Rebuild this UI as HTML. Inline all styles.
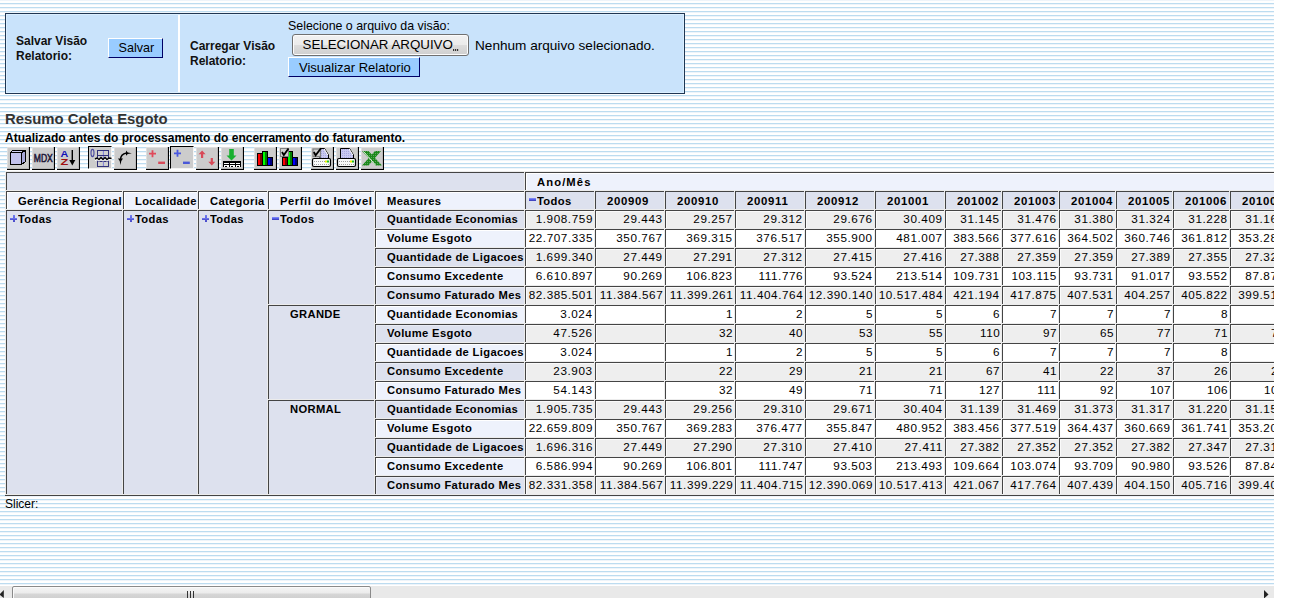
<!DOCTYPE html>
<html><head><meta charset="utf-8">
<style>
html,body{margin:0;padding:0;}
body{width:1302px;height:598px;overflow:hidden;background:#fff;position:relative;font-family:"Liberation Sans",sans-serif;}
#vp{position:absolute;left:0;top:0;width:1274px;height:586px;overflow:hidden;
 background-image:linear-gradient(to bottom,#eef4fa 0,#eef4fa 1px,#fff 1px,#fff 3px,#bcdcf0 3px,#bcdcf0 4px);
 background-size:100% 4px;}
.abs{position:absolute;white-space:nowrap;}
#box{position:absolute;left:5px;top:13px;width:680px;height:81px;box-sizing:border-box;border:1px solid #1f3652;background:#c9e3fb;box-shadow:inset 1px 1px 0 #dbefff,inset -1px -1px 0 #dbefff;}
#div{position:absolute;left:178px;top:15px;width:2px;height:77px;background:#fff;}
.lbl{position:absolute;font:bold 12px/15px "Liberation Sans",sans-serif;color:#111;white-space:nowrap;}
.bbtn{position:absolute;box-sizing:border-box;background:#99ccff;border-top:1px solid #fff;border-left:1px solid #fff;border-bottom:1px solid #000066;border-right:1px solid #000066;font:13px "Liberation Sans",sans-serif;color:#000;}
.fbtn{position:absolute;box-sizing:border-box;border:1px solid #707070;border-radius:3px;background:linear-gradient(to bottom,#f2f2f2 0,#ebebeb 50%,#dddddd 50%,#cfcfcf 100%);box-shadow:inset 0 0 0 1px #fcfcfc;font:13px "Liberation Sans",sans-serif;color:#000;}
.t{position:absolute;white-space:nowrap;}
.tb{position:absolute;top:147px;width:23px;height:23px;box-sizing:border-box;background:#cccccc;border-right:1px solid #000;border-bottom:1px solid #000;box-shadow:inset -1px -1px 0 #b8b8b8,inset 1px 1px 0 #dedede;}
.tb.p{top:146px;width:24px;border:none;border-top:1px solid #000;border-left:1px solid #000;border-right:1px solid #f4f4f4;border-bottom:1px solid #f4f4f4;box-shadow:none;background:#cccccc;}
.tb svg{position:absolute;left:0;top:0;}
/* table */
.c{position:absolute;box-sizing:border-box;border-top:1px solid #444;border-left:1px solid #444;white-space:nowrap;overflow:hidden;font:10px "Liberation Sans",sans-serif;color:#000;}
.hh{background:#dde1ee;}
.ch{background:#eef2fc;box-shadow:inset 1px 1px 0 #fff;}
.rl{background:#dde1ee;box-shadow:inset 1px 1px 0 #e9ecf5;}
.rd{background:#eef2fc;box-shadow:inset 1px 1px 0 #fff;}
.dg{background:#eeeeee;box-shadow:inset 1px 1px 0 #fafafa;}
.dw{background:#ffffff;}
.b{font-weight:bold;}
.tx{position:absolute;top:1px;line-height:16px;letter-spacing:0.3px;transform:scaleX(1.12);transform-origin:0 0;}
.tn{position:absolute;right:1px;top:1px;line-height:16px;letter-spacing:0.5px;transform:scaleX(1.17);transform-origin:100% 0;}
.td{letter-spacing:0.6px;transform:scaleX(1.14);}
.mi{position:absolute;top:6px;width:7px;height:3px;background:linear-gradient(#8a94fa,#5560e8 50%,#3838b0);}
.pi{position:absolute;top:4px;width:7px;height:7px;background:linear-gradient(#7480f4,#4848c8) 0 3px/7px 2px no-repeat,linear-gradient(#7480f4,#4848c8) 3px 0/2px 7px no-repeat;}
.hdr .tx{top:2px;}
#hs{position:absolute;left:0;top:586px;width:1274px;height:12px;background:#e9e9e9;}
</style></head><body>
<div id="vp">
<div id="box"></div>
<div id="div"></div>
<div class="lbl" style="left:16px;top:34px;">Salvar Visão<br>Relatorio:</div>
<div class="bbtn" style="left:108px;top:38px;width:55px;height:20px;"><span class="t" style="left:9.5px;top:2px;font-size:12.6px;">Salvar</span></div>
<div class="lbl" style="left:190px;top:39px;">Carregar Visão<br>Relatorio:</div>
<div class="t" style="left:288px;top:19px;font:12.4px 'Liberation Sans',sans-serif;color:#000;">Selecione o arquivo da visão:</div>
<div class="fbtn" style="left:292px;top:34px;width:177px;height:22px;"><span class="t" style="left:9.5px;top:2px;font-size:13.33px;">SELECIONAR ARQUIVO</span><span class="t" style="left:160px;top:14px;width:6px;height:2px;background:repeating-linear-gradient(to right,#333 0,#333 1px,rgba(0,0,0,0.15) 1px,rgba(0,0,0,0.15) 2px);"></span></div>
<div class="t" style="left:475px;top:38px;font:13.6px 'Liberation Sans',sans-serif;color:#000;">Nenhum arquivo selecionado.</div>
<div class="bbtn" style="left:288px;top:57px;width:132px;height:20px;"><span class="t" style="left:10px;top:2px;">Visualizar Relatorio</span></div>
<div class="t" style="left:5px;top:111px;font:bold 14.85px 'Liberation Sans',sans-serif;color:#333;">Resumo Coleta Esgoto</div>
<div class="t" style="left:5px;top:131px;font:bold 12px 'Liberation Sans',sans-serif;color:#000;">Atualizado antes do processamento do encerramento do faturamento.</div>
<div class="t" style="left:5px;top:497px;font:12px 'Liberation Sans',sans-serif;color:#000;">Slicer:</div>
<div class="tb" style="left:7px;"><svg width="23" height="23" viewBox="0 0 23 23" shape-rendering="crispEdges">
<path d="M14.5 5.5 L18.5 3.5 L18.5 14.5 L14.5 17.5 Z" fill="#a6a6d8" stroke="#000"/>
<path d="M3.5 5.5 L5.5 3.5 L18.5 3.5 L14.5 5.5 Z" fill="#d0d0f4" stroke="#000"/>
<rect x="3.5" y="5.5" width="11" height="12" fill="#c2c2ec" stroke="#000"/></svg></div>
<div class="tb" style="left:32px;"><svg width="23" height="23" viewBox="0 0 23 23">
<text x="1.8" y="15" font-family="Liberation Sans" font-size="11" fill="#1e1838" stroke="#1e1838" stroke-width="0.55" textLength="19" lengthAdjust="spacingAndGlyphs">MDX</text></svg></div>
<div class="tb" style="left:57px;"><svg width="23" height="23" viewBox="0 0 23 23">
<text x="3.4" y="10" font-family="Liberation Sans" font-size="9.5" font-weight="bold" fill="#1010b8" textLength="7.8" lengthAdjust="spacingAndGlyphs">A</text>
<text x="3.4" y="18.2" font-family="Liberation Sans" font-size="9.5" font-weight="bold" fill="#a01010" textLength="7.8" lengthAdjust="spacingAndGlyphs">Z</text>
<rect x="14.6" y="3" width="1.4" height="12" fill="#000"/><path d="M12.3 13 L18.3 13 L15.3 18.5 Z" fill="#000"/></svg></div>
<div class="tb p" style="left:88px;"><svg width="23" height="23" viewBox="0 0 23 23">
<ellipse cx="3.5" cy="6" rx="1.5" ry="3.6" fill="none" stroke="#4848a0" stroke-width="1.1"/>
<rect x="8.5" y="3.5" width="11" height="16" fill="#d0d0d0" stroke="#30307a"/>
<line x1="14.4" y1="4" x2="14.4" y2="19" stroke="#8080d8"/>
<line x1="9" y1="8.5" x2="19" y2="8.5" stroke="#30307a"/><line x1="9" y1="14.5" x2="19" y2="14.5" stroke="#30307a"/>
<path d="M6 12 L8 11 L10 12.5 L12 10.5 L14 12.5 L16 10.5 L18 12.5 L20 11 L22.5 11.5" fill="none" stroke="#fff" stroke-width="1.5" transform="translate(0,1.3)"/>
<path d="M6 12 L8 11 L10 12.5 L12 10.5 L14 12.5 L16 10.5 L18 12.5 L20 11 L22.5 11.5" fill="none" stroke="#000" stroke-width="1.4"/></svg></div>
<div class="tb" style="left:114px;"><svg width="23" height="23" viewBox="0 0 23 23">
<path d="M6.5 13 Q6.5 7 12.5 6" fill="none" stroke="#000" stroke-width="1.5"/>
<path d="M4 11.5 L9 11.5 L7.3 14 L6.5 18 L5.7 14 Z" fill="#000"/>
<path d="M12 3.6 L13.8 5.5 L17.8 6.2 L13.8 7 L12 8.8 Z" fill="#000"/></svg></div>
<div class="tb" style="left:146px;"><svg width="23" height="23" viewBox="0 0 23 23">
<path d="M3 5.8 H10 V7.6 H3 Z M5.6 3.2 H7.4 V10.2 H5.6 Z" fill="#e04a5a"/>
<rect x="12.2" y="14.6" width="6.8" height="2.4" fill="#d84a58"/></svg></div>
<div class="tb p" style="left:170px;"><svg width="23" height="23" viewBox="0 0 23 23">
<path d="M3 5.4 H10 V7.2 H3 Z M5.6 2.8 H7.4 V9.8 H5.6 Z" fill="#4a58e0"/>
<rect x="12" y="14.6" width="6.8" height="2.4" fill="#4a58d8"/></svg></div>
<div class="tb" style="left:196px;"><svg width="23" height="23" viewBox="0 0 23 23">
<path d="M6.1 3.5 L9.6 7.2 L7.2 7.2 L7.2 11 L5 11 L5 7.2 L2.6 7.2 Z" fill="#d84a58"/>
<path d="M15.8 18.5 L19.3 14.8 L16.9 14.8 L16.9 11 L14.7 11 L14.7 14.8 L12.3 14.8 Z" fill="#d84a58"/></svg></div>
<div class="tb" style="left:221px;"><svg width="23" height="23" viewBox="0 0 23 23">
<path d="M8.2 2 H12.8 V8.5 H15.5 L10.5 13.5 L5.5 8.5 H8.2 Z" fill="#18b030"/>
<g shape-rendering="crispEdges"><rect x="2" y="14" width="18" height="6" fill="#fff"/><rect x="2" y="14" width="18" height="1.5" fill="#000"/><rect x="2" y="17" width="18" height="1" fill="#000"/>
<rect x="2" y="14" width="1" height="6" fill="#000"/><rect x="8" y="14" width="1" height="6" fill="#000"/><rect x="14" y="14" width="1" height="6" fill="#000"/><rect x="19" y="14" width="1" height="6" fill="#000"/>
<rect x="4" y="19" width="2" height="1" fill="#000"/><rect x="10" y="19" width="2" height="1" fill="#000"/><rect x="16" y="19" width="2" height="1" fill="#000"/></g></svg></div>
<div class="tb" style="left:254px;"><svg width="23" height="23" viewBox="0 0 23 23" shape-rendering="crispEdges">
<rect x="3" y="6" width="6" height="13" fill="#000"/><rect x="4" y="7" width="2" height="11" fill="#ff0000"/><rect x="6" y="7" width="2" height="11" fill="#800000"/>
<rect x="8" y="4" width="6" height="15" fill="#000"/><rect x="9" y="5" width="2" height="13" fill="#00ff00"/><rect x="11" y="5" width="2" height="13" fill="#008000"/>
<rect x="13" y="10" width="6" height="9" fill="#000"/><rect x="14" y="11" width="2" height="7" fill="#0000ff"/><rect x="16" y="11" width="2" height="7" fill="#000080"/></svg></div>
<div class="tb" style="left:279px;"><svg width="23" height="23" viewBox="0 0 23 23" shape-rendering="crispEdges">
<rect x="3" y="10" width="6" height="9" fill="#000"/><rect x="4" y="11" width="2" height="7" fill="#ff0000"/><rect x="6" y="11" width="2" height="7" fill="#800000"/>
<rect x="8" y="4" width="6" height="15" fill="#000"/><rect x="9" y="5" width="2" height="13" fill="#00ff00"/><rect x="11" y="5" width="2" height="13" fill="#008000"/>
<rect x="13" y="10" width="6" height="9" fill="#000"/><rect x="14" y="11" width="2" height="7" fill="#0000ff"/><rect x="16" y="11" width="2" height="7" fill="#000080"/>
<rect x="1.5" y="1.5" width="8" height="8" fill="#d0d0d0" stroke="#808080"/>
<path d="M3 5 L4.8 8 L9.5 1.5" fill="none" stroke="#000" stroke-width="1.8" shape-rendering="auto"/></svg></div>
<div class="tb" style="left:311px;"><svg width="23" height="23" viewBox="0 0 23 23">
<defs><pattern id="dp" width="2" height="2" patternUnits="userSpaceOnUse"><rect width="2" height="2" fill="#c8c8f0"/><rect width="1" height="1" fill="#a8a8e0"/></pattern>
<pattern id="gp" width="2" height="2" patternUnits="userSpaceOnUse"><rect width="2" height="2" fill="#1a8a1a"/><rect width="1" height="1" fill="#60a060"/></pattern></defs>
<path d="M9 1.5 L13.5 1.5 L17.5 8 L17.5 11.5 L9 11.5 Z" fill="url(#dp)" stroke="#000"/>
<path d="M13.2 2 L16.8 8" stroke="#fff" stroke-width="1"/>
<rect x="2" y="2" width="7.5" height="7.5" fill="#d0d0d0" stroke="#808080" stroke-width="1.2"/>
<path d="M2.8 5 L4.6 8.3 L10 1.2" fill="none" stroke="#000" stroke-width="1.8"/>
<rect x="1.5" y="11.5" width="18" height="8" rx="1.5" fill="#fafafa" stroke="#000" stroke-width="1.2"/>
<line x1="3" y1="14.5" x2="14" y2="14.5" stroke="#a0a0a0" stroke-dasharray="1 1"/>
<line x1="3" y1="17.5" x2="18" y2="17.5" stroke="#a0a0a0" stroke-dasharray="1 1"/>
<rect x="14" y="13.5" width="2" height="2" fill="#f0f000"/><rect x="16" y="13.5" width="2" height="2" fill="#20c020"/></svg></div>
<div class="tb" style="left:336px;"><svg width="23" height="23" viewBox="0 0 23 23">
<path d="M4.5 1.5 L13.5 1.5 L17.5 8 L17.5 11.5 L4.5 11.5 Z" fill="url(#dp)" stroke="#000"/>
<path d="M13.2 2 L16.8 8" stroke="#fff"/>
<rect x="1.5" y="11.5" width="18" height="8" rx="1.5" fill="#fafafa" stroke="#000" stroke-width="1.2"/>
<line x1="3" y1="14.5" x2="14" y2="14.5" stroke="#a0a0a0" stroke-dasharray="1 1"/>
<line x1="3" y1="17.5" x2="18" y2="17.5" stroke="#a0a0a0" stroke-dasharray="1 1"/>
<rect x="14" y="13.5" width="2" height="2" fill="#f0f000"/><rect x="16" y="13.5" width="2" height="2" fill="#20c020"/></svg></div>
<div class="tb" style="left:361px;"><svg width="23" height="23" viewBox="0 0 23 23">
<path d="M1 4 L7.5 4 L21 18.5 L14.5 18.5 Z M14 4 L20 4 L7.5 18.5 L1 18.5 Z" fill="url(#gp)"/>
<line x1="2.5" y1="4.5" x2="14.5" y2="18" stroke="#f0fff0" stroke-width="0.9"/></svg></div>
<div style="position:absolute;left:5px;top:171px;width:1290px;height:324px;background:#ececec;"></div>
<div style="position:absolute;left:5px;top:495px;width:1290px;height:1px;background:#444;"></div>
<div class="c hh hdr" style="left:6px;top:172px;width:518px;height:18px;"></div>
<div class="c ch hdr" style="left:525px;top:172px;width:821px;height:18px;"><span class="tx b" style="left:11px;letter-spacing:1.0px">Ano/Mês</span></div>
<div class="c ch hdr" style="left:6px;top:191px;width:116px;height:18px;"><span class="tx b" style="left:11px">Gerência Regional</span></div>
<div class="c ch hdr" style="left:123px;top:191px;width:74px;height:18px;"><span class="tx b" style="left:11px">Localidade</span></div>
<div class="c ch hdr" style="left:198px;top:191px;width:69px;height:18px;"><span class="tx b" style="left:11px">Categoria</span></div>
<div class="c ch hdr" style="left:268px;top:191px;width:106px;height:18px;"><span class="tx b" style="left:11px;letter-spacing:0.5px">Perfil do Imóvel</span></div>
<div class="c ch hdr" style="left:375px;top:191px;width:149px;height:18px;"><span class="tx b" style="left:11px">Measures</span></div>
<div class="c hh hdr" style="left:525px;top:191px;width:69px;height:18px;"><span class="mi" style="left:3px"></span><span class="tx b" style="left:11px">Todos</span></div>
<div class="c hh hdr" style="left:595px;top:191px;width:69px;height:18px;"><span class="tx b td" style="left:11px">200909</span></div>
<div class="c hh hdr" style="left:665px;top:191px;width:69px;height:18px;"><span class="tx b td" style="left:11px">200910</span></div>
<div class="c hh hdr" style="left:735px;top:191px;width:69px;height:18px;"><span class="tx b td" style="left:11px">200911</span></div>
<div class="c hh hdr" style="left:805px;top:191px;width:69px;height:18px;"><span class="tx b td" style="left:11px">200912</span></div>
<div class="c hh hdr" style="left:875px;top:191px;width:69px;height:18px;"><span class="tx b td" style="left:11px">201001</span></div>
<div class="c hh hdr" style="left:945px;top:191px;width:56px;height:18px;"><span class="tx b td" style="left:11px">201002</span></div>
<div class="c hh hdr" style="left:1002px;top:191px;width:56px;height:18px;"><span class="tx b td" style="left:11px">201003</span></div>
<div class="c hh hdr" style="left:1059px;top:191px;width:56px;height:18px;"><span class="tx b td" style="left:11px">201004</span></div>
<div class="c hh hdr" style="left:1116px;top:191px;width:56px;height:18px;"><span class="tx b td" style="left:11px">201005</span></div>
<div class="c hh hdr" style="left:1173px;top:191px;width:56px;height:18px;"><span class="tx b td" style="left:11px">201006</span></div>
<div class="c hh hdr" style="left:1230px;top:191px;width:56px;height:18px;"><span class="tx b td" style="left:11px">201007</span></div>
<div class="c hh" style="left:6px;top:210px;width:116px;height:284px;"><span class="pi" style="left:3px"></span><span class="tx b" style="left:11px">Todas</span></div>
<div class="c hh" style="left:123px;top:210px;width:74px;height:284px;"><span class="pi" style="left:3px"></span><span class="tx b" style="left:11px">Todas</span></div>
<div class="c hh" style="left:198px;top:210px;width:69px;height:284px;"><span class="pi" style="left:3px"></span><span class="tx b" style="left:11px">Todas</span></div>
<div class="c hh" style="left:268px;top:210px;width:106px;height:94px;"><span class="mi" style="left:3px"></span><span class="tx b" style="left:11px">Todos</span></div>
<div class="c hh" style="left:268px;top:305px;width:106px;height:94px;"><span class="tx b" style="left:21px">GRANDE</span></div>
<div class="c hh" style="left:268px;top:400px;width:106px;height:94px;"><span class="tx b" style="left:21px">NORMAL</span></div>
<div class="c rl" style="left:375px;top:210px;width:149px;height:18px;"><span class="tx b" style="left:11px">Quantidade Economias</span></div>
<div class="c dg" style="left:525px;top:210px;width:69px;height:18px;"><span class="tn">1.908.759</span></div>
<div class="c dg" style="left:595px;top:210px;width:69px;height:18px;"><span class="tn">29.443</span></div>
<div class="c dg" style="left:665px;top:210px;width:69px;height:18px;"><span class="tn">29.257</span></div>
<div class="c dg" style="left:735px;top:210px;width:69px;height:18px;"><span class="tn">29.312</span></div>
<div class="c dg" style="left:805px;top:210px;width:69px;height:18px;"><span class="tn">29.676</span></div>
<div class="c dg" style="left:875px;top:210px;width:69px;height:18px;"><span class="tn">30.409</span></div>
<div class="c dg" style="left:945px;top:210px;width:56px;height:18px;"><span class="tn">31.145</span></div>
<div class="c dg" style="left:1002px;top:210px;width:56px;height:18px;"><span class="tn">31.476</span></div>
<div class="c dg" style="left:1059px;top:210px;width:56px;height:18px;"><span class="tn">31.380</span></div>
<div class="c dg" style="left:1116px;top:210px;width:56px;height:18px;"><span class="tn">31.324</span></div>
<div class="c dg" style="left:1173px;top:210px;width:56px;height:18px;"><span class="tn">31.228</span></div>
<div class="c dg" style="left:1230px;top:210px;width:56px;height:18px;"><span class="tn">31.167</span></div>
<div class="c rd" style="left:375px;top:229px;width:149px;height:18px;"><span class="tx b" style="left:11px">Volume Esgoto</span></div>
<div class="c dw" style="left:525px;top:229px;width:69px;height:18px;"><span class="tn">22.707.335</span></div>
<div class="c dw" style="left:595px;top:229px;width:69px;height:18px;"><span class="tn">350.767</span></div>
<div class="c dw" style="left:665px;top:229px;width:69px;height:18px;"><span class="tn">369.315</span></div>
<div class="c dw" style="left:735px;top:229px;width:69px;height:18px;"><span class="tn">376.517</span></div>
<div class="c dw" style="left:805px;top:229px;width:69px;height:18px;"><span class="tn">355.900</span></div>
<div class="c dw" style="left:875px;top:229px;width:69px;height:18px;"><span class="tn">481.007</span></div>
<div class="c dw" style="left:945px;top:229px;width:56px;height:18px;"><span class="tn">383.566</span></div>
<div class="c dw" style="left:1002px;top:229px;width:56px;height:18px;"><span class="tn">377.616</span></div>
<div class="c dw" style="left:1059px;top:229px;width:56px;height:18px;"><span class="tn">364.502</span></div>
<div class="c dw" style="left:1116px;top:229px;width:56px;height:18px;"><span class="tn">360.746</span></div>
<div class="c dw" style="left:1173px;top:229px;width:56px;height:18px;"><span class="tn">361.812</span></div>
<div class="c dw" style="left:1230px;top:229px;width:56px;height:18px;"><span class="tn">353.285</span></div>
<div class="c rl" style="left:375px;top:248px;width:149px;height:18px;"><span class="tx b" style="left:11px">Quantidade de Ligacoes</span></div>
<div class="c dg" style="left:525px;top:248px;width:69px;height:18px;"><span class="tn">1.699.340</span></div>
<div class="c dg" style="left:595px;top:248px;width:69px;height:18px;"><span class="tn">27.449</span></div>
<div class="c dg" style="left:665px;top:248px;width:69px;height:18px;"><span class="tn">27.291</span></div>
<div class="c dg" style="left:735px;top:248px;width:69px;height:18px;"><span class="tn">27.312</span></div>
<div class="c dg" style="left:805px;top:248px;width:69px;height:18px;"><span class="tn">27.415</span></div>
<div class="c dg" style="left:875px;top:248px;width:69px;height:18px;"><span class="tn">27.416</span></div>
<div class="c dg" style="left:945px;top:248px;width:56px;height:18px;"><span class="tn">27.388</span></div>
<div class="c dg" style="left:1002px;top:248px;width:56px;height:18px;"><span class="tn">27.359</span></div>
<div class="c dg" style="left:1059px;top:248px;width:56px;height:18px;"><span class="tn">27.359</span></div>
<div class="c dg" style="left:1116px;top:248px;width:56px;height:18px;"><span class="tn">27.389</span></div>
<div class="c dg" style="left:1173px;top:248px;width:56px;height:18px;"><span class="tn">27.355</span></div>
<div class="c dg" style="left:1230px;top:248px;width:56px;height:18px;"><span class="tn">27.323</span></div>
<div class="c rd" style="left:375px;top:267px;width:149px;height:18px;"><span class="tx b" style="left:11px">Consumo Excedente</span></div>
<div class="c dw" style="left:525px;top:267px;width:69px;height:18px;"><span class="tn">6.610.897</span></div>
<div class="c dw" style="left:595px;top:267px;width:69px;height:18px;"><span class="tn">90.269</span></div>
<div class="c dw" style="left:665px;top:267px;width:69px;height:18px;"><span class="tn">106.823</span></div>
<div class="c dw" style="left:735px;top:267px;width:69px;height:18px;"><span class="tn">111.776</span></div>
<div class="c dw" style="left:805px;top:267px;width:69px;height:18px;"><span class="tn">93.524</span></div>
<div class="c dw" style="left:875px;top:267px;width:69px;height:18px;"><span class="tn">213.514</span></div>
<div class="c dw" style="left:945px;top:267px;width:56px;height:18px;"><span class="tn">109.731</span></div>
<div class="c dw" style="left:1002px;top:267px;width:56px;height:18px;"><span class="tn">103.115</span></div>
<div class="c dw" style="left:1059px;top:267px;width:56px;height:18px;"><span class="tn">93.731</span></div>
<div class="c dw" style="left:1116px;top:267px;width:56px;height:18px;"><span class="tn">91.017</span></div>
<div class="c dw" style="left:1173px;top:267px;width:56px;height:18px;"><span class="tn">93.552</span></div>
<div class="c dw" style="left:1230px;top:267px;width:56px;height:18px;"><span class="tn">87.879</span></div>
<div class="c rl" style="left:375px;top:286px;width:149px;height:18px;"><span class="tx b" style="left:11px">Consumo Faturado Mes</span></div>
<div class="c dg" style="left:525px;top:286px;width:69px;height:18px;"><span class="tn">82.385.501</span></div>
<div class="c dg" style="left:595px;top:286px;width:69px;height:18px;"><span class="tn">11.384.567</span></div>
<div class="c dg" style="left:665px;top:286px;width:69px;height:18px;"><span class="tn">11.399.261</span></div>
<div class="c dg" style="left:735px;top:286px;width:69px;height:18px;"><span class="tn">11.404.764</span></div>
<div class="c dg" style="left:805px;top:286px;width:69px;height:18px;"><span class="tn">12.390.140</span></div>
<div class="c dg" style="left:875px;top:286px;width:69px;height:18px;"><span class="tn">10.517.484</span></div>
<div class="c dg" style="left:945px;top:286px;width:56px;height:18px;"><span class="tn">421.194</span></div>
<div class="c dg" style="left:1002px;top:286px;width:56px;height:18px;"><span class="tn">417.875</span></div>
<div class="c dg" style="left:1059px;top:286px;width:56px;height:18px;"><span class="tn">407.531</span></div>
<div class="c dg" style="left:1116px;top:286px;width:56px;height:18px;"><span class="tn">404.257</span></div>
<div class="c dg" style="left:1173px;top:286px;width:56px;height:18px;"><span class="tn">405.822</span></div>
<div class="c dg" style="left:1230px;top:286px;width:56px;height:18px;"><span class="tn">399.514</span></div>
<div class="c rd" style="left:375px;top:305px;width:149px;height:18px;"><span class="tx b" style="left:11px">Quantidade Economias</span></div>
<div class="c dw" style="left:525px;top:305px;width:69px;height:18px;"><span class="tn">3.024</span></div>
<div class="c dw" style="left:595px;top:305px;width:69px;height:18px;"></div>
<div class="c dw" style="left:665px;top:305px;width:69px;height:18px;"><span class="tn">1</span></div>
<div class="c dw" style="left:735px;top:305px;width:69px;height:18px;"><span class="tn">2</span></div>
<div class="c dw" style="left:805px;top:305px;width:69px;height:18px;"><span class="tn">5</span></div>
<div class="c dw" style="left:875px;top:305px;width:69px;height:18px;"><span class="tn">5</span></div>
<div class="c dw" style="left:945px;top:305px;width:56px;height:18px;"><span class="tn">6</span></div>
<div class="c dw" style="left:1002px;top:305px;width:56px;height:18px;"><span class="tn">7</span></div>
<div class="c dw" style="left:1059px;top:305px;width:56px;height:18px;"><span class="tn">7</span></div>
<div class="c dw" style="left:1116px;top:305px;width:56px;height:18px;"><span class="tn">7</span></div>
<div class="c dw" style="left:1173px;top:305px;width:56px;height:18px;"><span class="tn">8</span></div>
<div class="c dw" style="left:1230px;top:305px;width:56px;height:18px;"><span class="tn">8</span></div>
<div class="c rl" style="left:375px;top:324px;width:149px;height:18px;"><span class="tx b" style="left:11px">Volume Esgoto</span></div>
<div class="c dg" style="left:525px;top:324px;width:69px;height:18px;"><span class="tn">47.526</span></div>
<div class="c dg" style="left:595px;top:324px;width:69px;height:18px;"></div>
<div class="c dg" style="left:665px;top:324px;width:69px;height:18px;"><span class="tn">32</span></div>
<div class="c dg" style="left:735px;top:324px;width:69px;height:18px;"><span class="tn">40</span></div>
<div class="c dg" style="left:805px;top:324px;width:69px;height:18px;"><span class="tn">53</span></div>
<div class="c dg" style="left:875px;top:324px;width:69px;height:18px;"><span class="tn">55</span></div>
<div class="c dg" style="left:945px;top:324px;width:56px;height:18px;"><span class="tn">110</span></div>
<div class="c dg" style="left:1002px;top:324px;width:56px;height:18px;"><span class="tn">97</span></div>
<div class="c dg" style="left:1059px;top:324px;width:56px;height:18px;"><span class="tn">65</span></div>
<div class="c dg" style="left:1116px;top:324px;width:56px;height:18px;"><span class="tn">77</span></div>
<div class="c dg" style="left:1173px;top:324px;width:56px;height:18px;"><span class="tn">71</span></div>
<div class="c dg" style="left:1230px;top:324px;width:56px;height:18px;"><span class="tn">73</span></div>
<div class="c rd" style="left:375px;top:343px;width:149px;height:18px;"><span class="tx b" style="left:11px">Quantidade de Ligacoes</span></div>
<div class="c dw" style="left:525px;top:343px;width:69px;height:18px;"><span class="tn">3.024</span></div>
<div class="c dw" style="left:595px;top:343px;width:69px;height:18px;"></div>
<div class="c dw" style="left:665px;top:343px;width:69px;height:18px;"><span class="tn">1</span></div>
<div class="c dw" style="left:735px;top:343px;width:69px;height:18px;"><span class="tn">2</span></div>
<div class="c dw" style="left:805px;top:343px;width:69px;height:18px;"><span class="tn">5</span></div>
<div class="c dw" style="left:875px;top:343px;width:69px;height:18px;"><span class="tn">5</span></div>
<div class="c dw" style="left:945px;top:343px;width:56px;height:18px;"><span class="tn">6</span></div>
<div class="c dw" style="left:1002px;top:343px;width:56px;height:18px;"><span class="tn">7</span></div>
<div class="c dw" style="left:1059px;top:343px;width:56px;height:18px;"><span class="tn">7</span></div>
<div class="c dw" style="left:1116px;top:343px;width:56px;height:18px;"><span class="tn">7</span></div>
<div class="c dw" style="left:1173px;top:343px;width:56px;height:18px;"><span class="tn">8</span></div>
<div class="c dw" style="left:1230px;top:343px;width:56px;height:18px;"><span class="tn">8</span></div>
<div class="c rl" style="left:375px;top:362px;width:149px;height:18px;"><span class="tx b" style="left:11px">Consumo Excedente</span></div>
<div class="c dg" style="left:525px;top:362px;width:69px;height:18px;"><span class="tn">23.903</span></div>
<div class="c dg" style="left:595px;top:362px;width:69px;height:18px;"></div>
<div class="c dg" style="left:665px;top:362px;width:69px;height:18px;"><span class="tn">22</span></div>
<div class="c dg" style="left:735px;top:362px;width:69px;height:18px;"><span class="tn">29</span></div>
<div class="c dg" style="left:805px;top:362px;width:69px;height:18px;"><span class="tn">21</span></div>
<div class="c dg" style="left:875px;top:362px;width:69px;height:18px;"><span class="tn">21</span></div>
<div class="c dg" style="left:945px;top:362px;width:56px;height:18px;"><span class="tn">67</span></div>
<div class="c dg" style="left:1002px;top:362px;width:56px;height:18px;"><span class="tn">41</span></div>
<div class="c dg" style="left:1059px;top:362px;width:56px;height:18px;"><span class="tn">22</span></div>
<div class="c dg" style="left:1116px;top:362px;width:56px;height:18px;"><span class="tn">37</span></div>
<div class="c dg" style="left:1173px;top:362px;width:56px;height:18px;"><span class="tn">26</span></div>
<div class="c dg" style="left:1230px;top:362px;width:56px;height:18px;"><span class="tn">26</span></div>
<div class="c rd" style="left:375px;top:381px;width:149px;height:18px;"><span class="tx b" style="left:11px">Consumo Faturado Mes</span></div>
<div class="c dw" style="left:525px;top:381px;width:69px;height:18px;"><span class="tn">54.143</span></div>
<div class="c dw" style="left:595px;top:381px;width:69px;height:18px;"></div>
<div class="c dw" style="left:665px;top:381px;width:69px;height:18px;"><span class="tn">32</span></div>
<div class="c dw" style="left:735px;top:381px;width:69px;height:18px;"><span class="tn">49</span></div>
<div class="c dw" style="left:805px;top:381px;width:69px;height:18px;"><span class="tn">71</span></div>
<div class="c dw" style="left:875px;top:381px;width:69px;height:18px;"><span class="tn">71</span></div>
<div class="c dw" style="left:945px;top:381px;width:56px;height:18px;"><span class="tn">127</span></div>
<div class="c dw" style="left:1002px;top:381px;width:56px;height:18px;"><span class="tn">111</span></div>
<div class="c dw" style="left:1059px;top:381px;width:56px;height:18px;"><span class="tn">92</span></div>
<div class="c dw" style="left:1116px;top:381px;width:56px;height:18px;"><span class="tn">107</span></div>
<div class="c dw" style="left:1173px;top:381px;width:56px;height:18px;"><span class="tn">106</span></div>
<div class="c dw" style="left:1230px;top:381px;width:56px;height:18px;"><span class="tn">106</span></div>
<div class="c rl" style="left:375px;top:400px;width:149px;height:18px;"><span class="tx b" style="left:11px">Quantidade Economias</span></div>
<div class="c dg" style="left:525px;top:400px;width:69px;height:18px;"><span class="tn">1.905.735</span></div>
<div class="c dg" style="left:595px;top:400px;width:69px;height:18px;"><span class="tn">29.443</span></div>
<div class="c dg" style="left:665px;top:400px;width:69px;height:18px;"><span class="tn">29.256</span></div>
<div class="c dg" style="left:735px;top:400px;width:69px;height:18px;"><span class="tn">29.310</span></div>
<div class="c dg" style="left:805px;top:400px;width:69px;height:18px;"><span class="tn">29.671</span></div>
<div class="c dg" style="left:875px;top:400px;width:69px;height:18px;"><span class="tn">30.404</span></div>
<div class="c dg" style="left:945px;top:400px;width:56px;height:18px;"><span class="tn">31.139</span></div>
<div class="c dg" style="left:1002px;top:400px;width:56px;height:18px;"><span class="tn">31.469</span></div>
<div class="c dg" style="left:1059px;top:400px;width:56px;height:18px;"><span class="tn">31.373</span></div>
<div class="c dg" style="left:1116px;top:400px;width:56px;height:18px;"><span class="tn">31.317</span></div>
<div class="c dg" style="left:1173px;top:400px;width:56px;height:18px;"><span class="tn">31.220</span></div>
<div class="c dg" style="left:1230px;top:400px;width:56px;height:18px;"><span class="tn">31.159</span></div>
<div class="c rd" style="left:375px;top:419px;width:149px;height:18px;"><span class="tx b" style="left:11px">Volume Esgoto</span></div>
<div class="c dw" style="left:525px;top:419px;width:69px;height:18px;"><span class="tn">22.659.809</span></div>
<div class="c dw" style="left:595px;top:419px;width:69px;height:18px;"><span class="tn">350.767</span></div>
<div class="c dw" style="left:665px;top:419px;width:69px;height:18px;"><span class="tn">369.283</span></div>
<div class="c dw" style="left:735px;top:419px;width:69px;height:18px;"><span class="tn">376.477</span></div>
<div class="c dw" style="left:805px;top:419px;width:69px;height:18px;"><span class="tn">355.847</span></div>
<div class="c dw" style="left:875px;top:419px;width:69px;height:18px;"><span class="tn">480.952</span></div>
<div class="c dw" style="left:945px;top:419px;width:56px;height:18px;"><span class="tn">383.456</span></div>
<div class="c dw" style="left:1002px;top:419px;width:56px;height:18px;"><span class="tn">377.519</span></div>
<div class="c dw" style="left:1059px;top:419px;width:56px;height:18px;"><span class="tn">364.437</span></div>
<div class="c dw" style="left:1116px;top:419px;width:56px;height:18px;"><span class="tn">360.669</span></div>
<div class="c dw" style="left:1173px;top:419px;width:56px;height:18px;"><span class="tn">361.741</span></div>
<div class="c dw" style="left:1230px;top:419px;width:56px;height:18px;"><span class="tn">353.201</span></div>
<div class="c rl" style="left:375px;top:438px;width:149px;height:18px;"><span class="tx b" style="left:11px">Quantidade de Ligacoes</span></div>
<div class="c dg" style="left:525px;top:438px;width:69px;height:18px;"><span class="tn">1.696.316</span></div>
<div class="c dg" style="left:595px;top:438px;width:69px;height:18px;"><span class="tn">27.449</span></div>
<div class="c dg" style="left:665px;top:438px;width:69px;height:18px;"><span class="tn">27.290</span></div>
<div class="c dg" style="left:735px;top:438px;width:69px;height:18px;"><span class="tn">27.310</span></div>
<div class="c dg" style="left:805px;top:438px;width:69px;height:18px;"><span class="tn">27.410</span></div>
<div class="c dg" style="left:875px;top:438px;width:69px;height:18px;"><span class="tn">27.411</span></div>
<div class="c dg" style="left:945px;top:438px;width:56px;height:18px;"><span class="tn">27.382</span></div>
<div class="c dg" style="left:1002px;top:438px;width:56px;height:18px;"><span class="tn">27.352</span></div>
<div class="c dg" style="left:1059px;top:438px;width:56px;height:18px;"><span class="tn">27.352</span></div>
<div class="c dg" style="left:1116px;top:438px;width:56px;height:18px;"><span class="tn">27.382</span></div>
<div class="c dg" style="left:1173px;top:438px;width:56px;height:18px;"><span class="tn">27.347</span></div>
<div class="c dg" style="left:1230px;top:438px;width:56px;height:18px;"><span class="tn">27.315</span></div>
<div class="c rd" style="left:375px;top:457px;width:149px;height:18px;"><span class="tx b" style="left:11px">Consumo Excedente</span></div>
<div class="c dw" style="left:525px;top:457px;width:69px;height:18px;"><span class="tn">6.586.994</span></div>
<div class="c dw" style="left:595px;top:457px;width:69px;height:18px;"><span class="tn">90.269</span></div>
<div class="c dw" style="left:665px;top:457px;width:69px;height:18px;"><span class="tn">106.801</span></div>
<div class="c dw" style="left:735px;top:457px;width:69px;height:18px;"><span class="tn">111.747</span></div>
<div class="c dw" style="left:805px;top:457px;width:69px;height:18px;"><span class="tn">93.503</span></div>
<div class="c dw" style="left:875px;top:457px;width:69px;height:18px;"><span class="tn">213.493</span></div>
<div class="c dw" style="left:945px;top:457px;width:56px;height:18px;"><span class="tn">109.664</span></div>
<div class="c dw" style="left:1002px;top:457px;width:56px;height:18px;"><span class="tn">103.074</span></div>
<div class="c dw" style="left:1059px;top:457px;width:56px;height:18px;"><span class="tn">93.709</span></div>
<div class="c dw" style="left:1116px;top:457px;width:56px;height:18px;"><span class="tn">90.980</span></div>
<div class="c dw" style="left:1173px;top:457px;width:56px;height:18px;"><span class="tn">93.526</span></div>
<div class="c dw" style="left:1230px;top:457px;width:56px;height:18px;"><span class="tn">87.845</span></div>
<div class="c rl" style="left:375px;top:476px;width:149px;height:18px;"><span class="tx b" style="left:11px">Consumo Faturado Mes</span></div>
<div class="c dg" style="left:525px;top:476px;width:69px;height:18px;"><span class="tn">82.331.358</span></div>
<div class="c dg" style="left:595px;top:476px;width:69px;height:18px;"><span class="tn">11.384.567</span></div>
<div class="c dg" style="left:665px;top:476px;width:69px;height:18px;"><span class="tn">11.399.229</span></div>
<div class="c dg" style="left:735px;top:476px;width:69px;height:18px;"><span class="tn">11.404.715</span></div>
<div class="c dg" style="left:805px;top:476px;width:69px;height:18px;"><span class="tn">12.390.069</span></div>
<div class="c dg" style="left:875px;top:476px;width:69px;height:18px;"><span class="tn">10.517.413</span></div>
<div class="c dg" style="left:945px;top:476px;width:56px;height:18px;"><span class="tn">421.067</span></div>
<div class="c dg" style="left:1002px;top:476px;width:56px;height:18px;"><span class="tn">417.764</span></div>
<div class="c dg" style="left:1059px;top:476px;width:56px;height:18px;"><span class="tn">407.439</span></div>
<div class="c dg" style="left:1116px;top:476px;width:56px;height:18px;"><span class="tn">404.150</span></div>
<div class="c dg" style="left:1173px;top:476px;width:56px;height:18px;"><span class="tn">405.716</span></div>
<div class="c dg" style="left:1230px;top:476px;width:56px;height:18px;"><span class="tn">399.404</span></div></div>
<div id="hs">
<svg style="position:absolute;left:0;top:0" width="12" height="12"><path d="M-0.5 8.5 L3.8 4 L3.8 12 Z" fill="#222"/></svg>
<div style="position:absolute;left:12px;top:0;width:359px;height:14px;box-sizing:border-box;border:1px solid #8a8a8a;border-radius:2px;background:linear-gradient(to bottom,#f4f4f4 0,#ececec 6px,#d6d6d6 7px,#cfcfcf 100%);box-shadow:inset 1px 1px 0 #fafafa;"></div>
<svg style="position:absolute;left:185px;top:4px" width="12" height="8"><g stroke="#333" stroke-width="1"><line x1="2.5" y1="1" x2="2.5" y2="8"/><line x1="5.5" y1="1" x2="5.5" y2="8"/><line x1="8.5" y1="1" x2="8.5" y2="8"/></g></svg>
<svg style="position:absolute;left:1260px;top:0" width="14" height="12"><path d="M4 4 L8.5 8.5 L4 12.5 Z" fill="#222"/></svg>
</div>
</body></html>
